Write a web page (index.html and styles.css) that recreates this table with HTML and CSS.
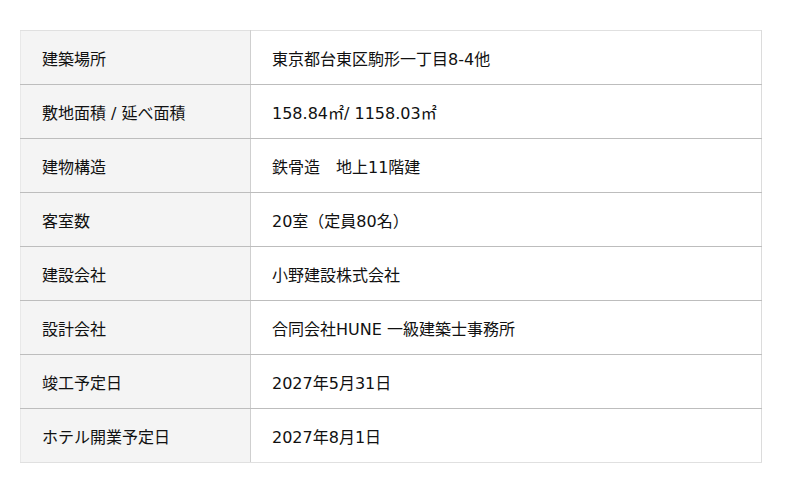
FILE: index.html
```html
<!DOCTYPE html>
<html lang="ja">
<head>
<meta charset="utf-8">
<link rel="stylesheet" href="styles.css">
</head>
<body>
<table class="spec">
  <tbody>
    <tr><th>建築場所</th><td>東京都台東区駒形一丁目8-4他</td></tr>
    <tr><th>敷地面積 / 延べ面積</th><td>158.84㎡/ 1158.03㎡</td></tr>
    <tr><th>建物構造</th><td>鉄骨造　地上11階建</td></tr>
    <tr><th>客室数</th><td>20室（定員80名）</td></tr>
    <tr><th>建設会社</th><td>小野建設株式会社</td></tr>
    <tr><th>設計会社</th><td>合同会社HUNE 一級建築士事務所</td></tr>
    <tr><th>竣工予定日</th><td>2027年5月31日</td></tr>
    <tr><th>ホテル開業予定日</th><td>2027年8月1日</td></tr>
  </tbody>
</table>
</body>
</html>
```
FILE: styles.css
```css
html, body {
  margin: 0;
  padding: 0;
  background: #ffffff;
}
body {
  padding: 30px 38px 0 20px;
  font-family: "DejaVu Sans", "Noto Sans CJK JP", sans-serif;
  font-size: 16px;
  color: #111111;
}
.spec {
  width: 742px;
  border-collapse: collapse;
  border-top: 1px solid #e0e0e0;
  border-bottom: 1px solid #e0e0e0;
  border-left: 1px solid #e8e8e8;
  border-right: 1px solid #dcdcdc;
}
.spec th,
.spec td {
  height: 53px;
  padding: 0 0 0 21px;
  text-align: left;
  font-weight: normal;
  vertical-align: middle;
  border-bottom: 1px solid #bdbdbd;
}
.spec tr:last-child th,
.spec tr:last-child td {
  border-bottom: 1px solid #e0e0e0;
}
.spec th {
  width: 208px;
  background: #f4f4f4;
  border-right: 1px solid #cfcfcf;
}
.spec td {
  background: #ffffff;
}
```
